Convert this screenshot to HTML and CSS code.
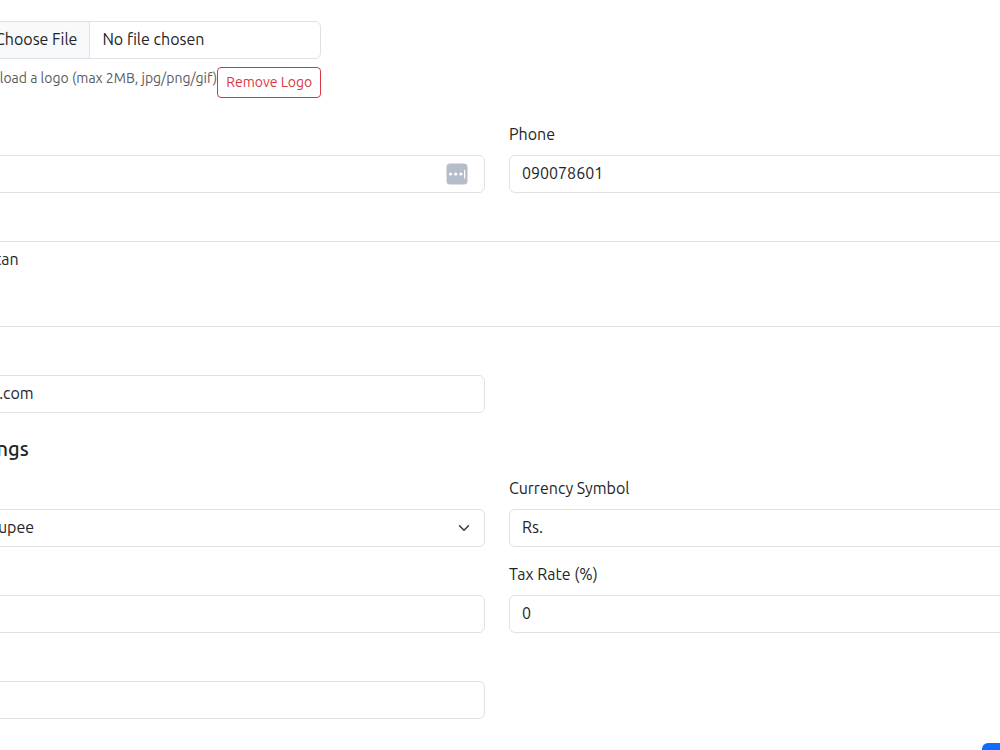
FILE: index.html
```html
<!DOCTYPE html>
<html lang="en">
<head>
<meta charset="utf-8">
<title>Settings</title>
<link rel="stylesheet" href="styles.css">
</head>
<body>
<form class="settings">
  <div class="upload">
    <input class="file" type="file" aria-label="Logo">
    <div class="upload-note">
      <span class="hint">Upload a logo (max 2MB, jpg/png/gif)</span>
      <button class="remove" type="button">Remove Logo</button>
    </div>
  </div>

  <div class="grid">
    <div class="field">
      <div class="box">
        <input class="control" type="text" aria-label="Name">
        <svg class="autofill" viewBox="0 0 22 22" aria-hidden="true">
          <rect x="0.5" y="0.5" width="21" height="21" rx="3.5" fill="#b6bdca"/>
          <g fill="#fff"><circle cx="4.5" cy="11" r="1.6"/><circle cx="9.7" cy="11" r="1.6"/><circle cx="14.9" cy="11" r="1.6"/><rect x="18" y="7" width="1.2" height="8.5"/></g>
        </svg>
      </div>
    </div>
    <div class="field">
      <label for="phone">Phone</label>
      <input class="control" id="phone" type="tel" value="090078601">
    </div>
    <div class="field wide unlabelled">
      <textarea class="control area" aria-label="Address">stan</textarea>
    </div>
    <div class="field unlabelled">
      <input class="control" type="text" aria-label="Website" value="ls.com">
    </div>
  </div>

  <h2 class="heading">ttings</h2>

  <div class="grid">
    <div class="field">
      <div class="box">
        <select class="control" aria-label="Currency"><option>Rupee</option></select>
        <svg class="chevron" viewBox="0 0 16 16" aria-hidden="true"><path d="m2 5 6 6 6-6" fill="none" stroke="#343a40" stroke-width="2" stroke-linecap="round" stroke-linejoin="round"/></svg>
      </div>
    </div>
    <div class="field">
      <label for="symbol">Currency Symbol</label>
      <input class="control" id="symbol" type="text" value="Rs.">
    </div>
    <div class="field">
      <input class="control" type="text" aria-label="Prefix">
    </div>
    <div class="field">
      <label for="tax">Tax Rate (%)</label>
      <input class="control" id="tax" type="text" value="0">
    </div>
    <div class="field unlabelled">
      <input class="control" type="text" aria-label="Footer">
    </div>
  </div>

  <div class="actions">
    <button class="save" type="submit" aria-label="Save"></button>
  </div>
</form>
</body>
</html>
```
FILE: styles.css
```css
* { box-sizing: border-box; }

body {
  margin: 0;
  overflow: hidden;
  background: #fff;
  color: #212529;
  font-family: Ubuntu, "Noto Sans", sans-serif;
  font-size: 16px;
  line-height: 24px;
}

input, select, textarea, button { font: inherit; color: inherit; }

.settings {
  margin: 0 -133px 0 -25px;
  padding-top: 21px;
}

.upload {
  width: 339px;
  margin: 0 0 25px 7px;
}

.file {
  display: block;
  width: 100%;
  height: 38px;
  padding: 5px 12px 7px;
  border: 1px solid #dee2e6;
  border-radius: 6px;
  overflow: hidden;
}

.file::file-selector-button {
  margin: -5px 12px -7px -12px;
  padding: 5px 12px 7px;
  border: 0 solid #dee2e6;
  border-right-width: 1px;
  background: #f8f9fa;
  color: #212529;
  font: inherit;
}

.upload-note {
  display: flex;
  justify-content: space-between;
  align-items: flex-start;
  margin-top: 8px;
}

.hint {
  color: #595c5f;
  font-size: 14px;
  line-height: 23px;
  white-space: nowrap;
}

.remove {
  flex: none;
  width: 104px;
  height: 31px;
  padding: 0;
  border: 1px solid #dc3545;
  border-radius: 4px;
  background: #fff;
  color: #dc3545;
  font-size: 14px;
  line-height: 21px;
  white-space: nowrap;
}

.grid {
  display: grid;
  grid-template-columns: 85fr 104fr;
  gap: 16px 24px;
  align-items: end;
}

.wide { grid-column: 1 / -1; }
.unlabelled { padding-top: 32px; }

.field label {
  display: block;
  margin-bottom: 10px;
  line-height: 22px;
}

.box { position: relative; }

.control {
  display: block;
  width: 100%;
  height: 38px;
  padding: 5px 12px 7px;
  border: 1px solid #dee2e6;
  border-radius: 6px;
  background: #fff;
  appearance: none;
}

.area {
  height: 86px;
  resize: none;
}

.autofill {
  position: absolute;
  top: 8px;
  right: 17px;
  width: 22px;
  height: 22px;
}

.chevron {
  position: absolute;
  top: 13px;
  right: 15px;
  width: 12px;
  height: 12px;
}

.heading {
  margin: 24px 0 16px;
  font-size: 20px;
  font-weight: 500;
  line-height: 24px;
}

.actions {
  display: flex;
  justify-content: flex-end;
  margin-top: 24px;
}

.save {
  width: 151px;
  height: 38px;
  border: 0;
  border-radius: 6px;
  background: #0d6efd;
}
```
